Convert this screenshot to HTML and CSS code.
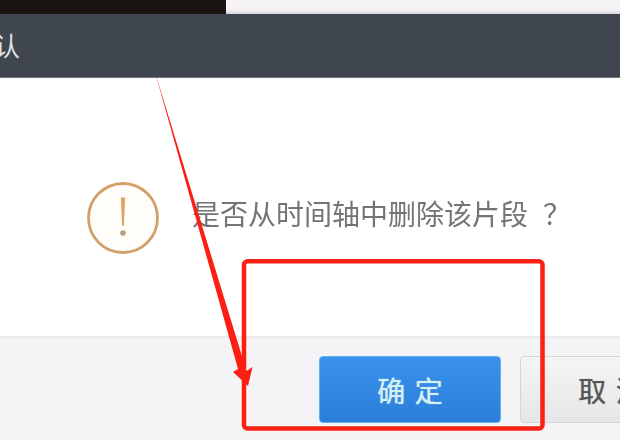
FILE: index.html
```html
<!DOCTYPE html>
<html lang="zh">
<head>
<meta charset="utf-8">
<title>确认</title>
<link rel="stylesheet" href="styles.css">
</head>
<body>
<div class="page">
  <div class="strip"><div class="strip-dark"></div><div class="strip-light"></div></div>
  <header class="head"><span class="title">确认</span></header>
  <main class="body">
    <svg class="warn" width="76" height="76" viewBox="0 0 76 76" aria-hidden="true">
      <circle cx="38" cy="37" r="34.5" fill="#fffdfa" stroke="#d3a06a" stroke-width="2.8"/>
      <path d="M35.800 16.500h4.400l-1.300 28.500h-1.800z" fill="#e0a660"/>
      <circle cx="38" cy="52" r="2.800" fill="#b9a088"/>
    </svg>
    <p class="msg">是否从时间轴中删除该片段<span class="mark">？</span></p>
  </main>
  <footer class="foot">
    <button class="btn ok">确 定</button>
    <button class="btn cancel">取 消</button>
  </footer>
</div>
<svg class="marks" width="620" height="440" viewBox="0 0 620 440" aria-hidden="true">
  <path d="M155 72 L238 369 L233 372 L248 386 L252.500 367 L246.500 371 Z" fill="#fb1f14"/>
  <rect x="244" y="261.250" width="298.500" height="167.250" rx="3.500" fill="none" stroke="#fb1f14" stroke-width="4.500"/>
</svg>
</body>
</html>
```
FILE: styles.css
```css
html, body {
  margin: 0;
  padding: 0;
  width: 620px;
  height: 440px;
  overflow: hidden;
  background: #fff;
  font-family: "Noto Sans CJK SC", "Liberation Sans", sans-serif;
}
.page {
  display: flex;
  flex-direction: column;
  width: 620px;
  height: 440px;
}
.strip {
  display: flex;
  height: 14px;
  flex: none;
}
.strip-dark {
  width: 226px;
  background: #1a1510;
}
.strip-light {
  flex: 1;
  background: linear-gradient(#f6f3f6 70%, #d8d4da);
}
.head {
  flex: none;
  height: 64px;
  box-sizing: border-box;
  background: #3f4650;
  border-bottom: 1px solid #70767e;
  display: flex;
  align-items: center;
  padding-bottom: 2px;
}
.title {
  margin-left: -32px;
  font-size: 26px;
  line-height: 1;
  color: #dcdee0;
  white-space: nowrap;
}
.body {
  flex: none;
  height: 258px;
  box-sizing: border-box;
  padding: 103px 0 0 85px;
  display: flex;
  align-items: flex-start;
  gap: 31px;
  background: #fff;
}
.warn {
  flex: none;
}
.msg {
  margin: 12px 0 0;
  font-size: 28px;
  line-height: 40px;
  color: #747476;
  white-space: nowrap;
  filter: blur(0.4px);
}
.mark {
  margin-left: 15px;
}
.foot {
  flex: 1;
  background: #f4f3f5;
  border-top: 2px solid #ebeaec;
  box-sizing: border-box;
  padding: 18px 0 0 319px;
  display: flex;
  align-items: flex-start;
  gap: 19px;
}
.btn {
  flex: none;
  width: 182px;
  height: 67px;
  box-sizing: border-box;
  border-radius: 4px;
  font-family: inherit;
  font-size: 28px;
  line-height: 1;
  padding: 0;
  white-space: nowrap;
  word-spacing: 3px;
}
.ok {
  background: linear-gradient(#3a92ee, #2a7ed8);
  border: 1px solid #5fb0ee;
  color: #d4f0f4;
  text-shadow: 0 0 1px #d4f0f4;
}
.cancel {
  background: linear-gradient(#f6f5f6, #e6e5e7);
  border: 1px solid #d4d3d5;
  color: #555;
  text-shadow: 0 0 1px #888;
}
.marks {
  position: absolute;
  left: 0;
  top: 0;
}
```
